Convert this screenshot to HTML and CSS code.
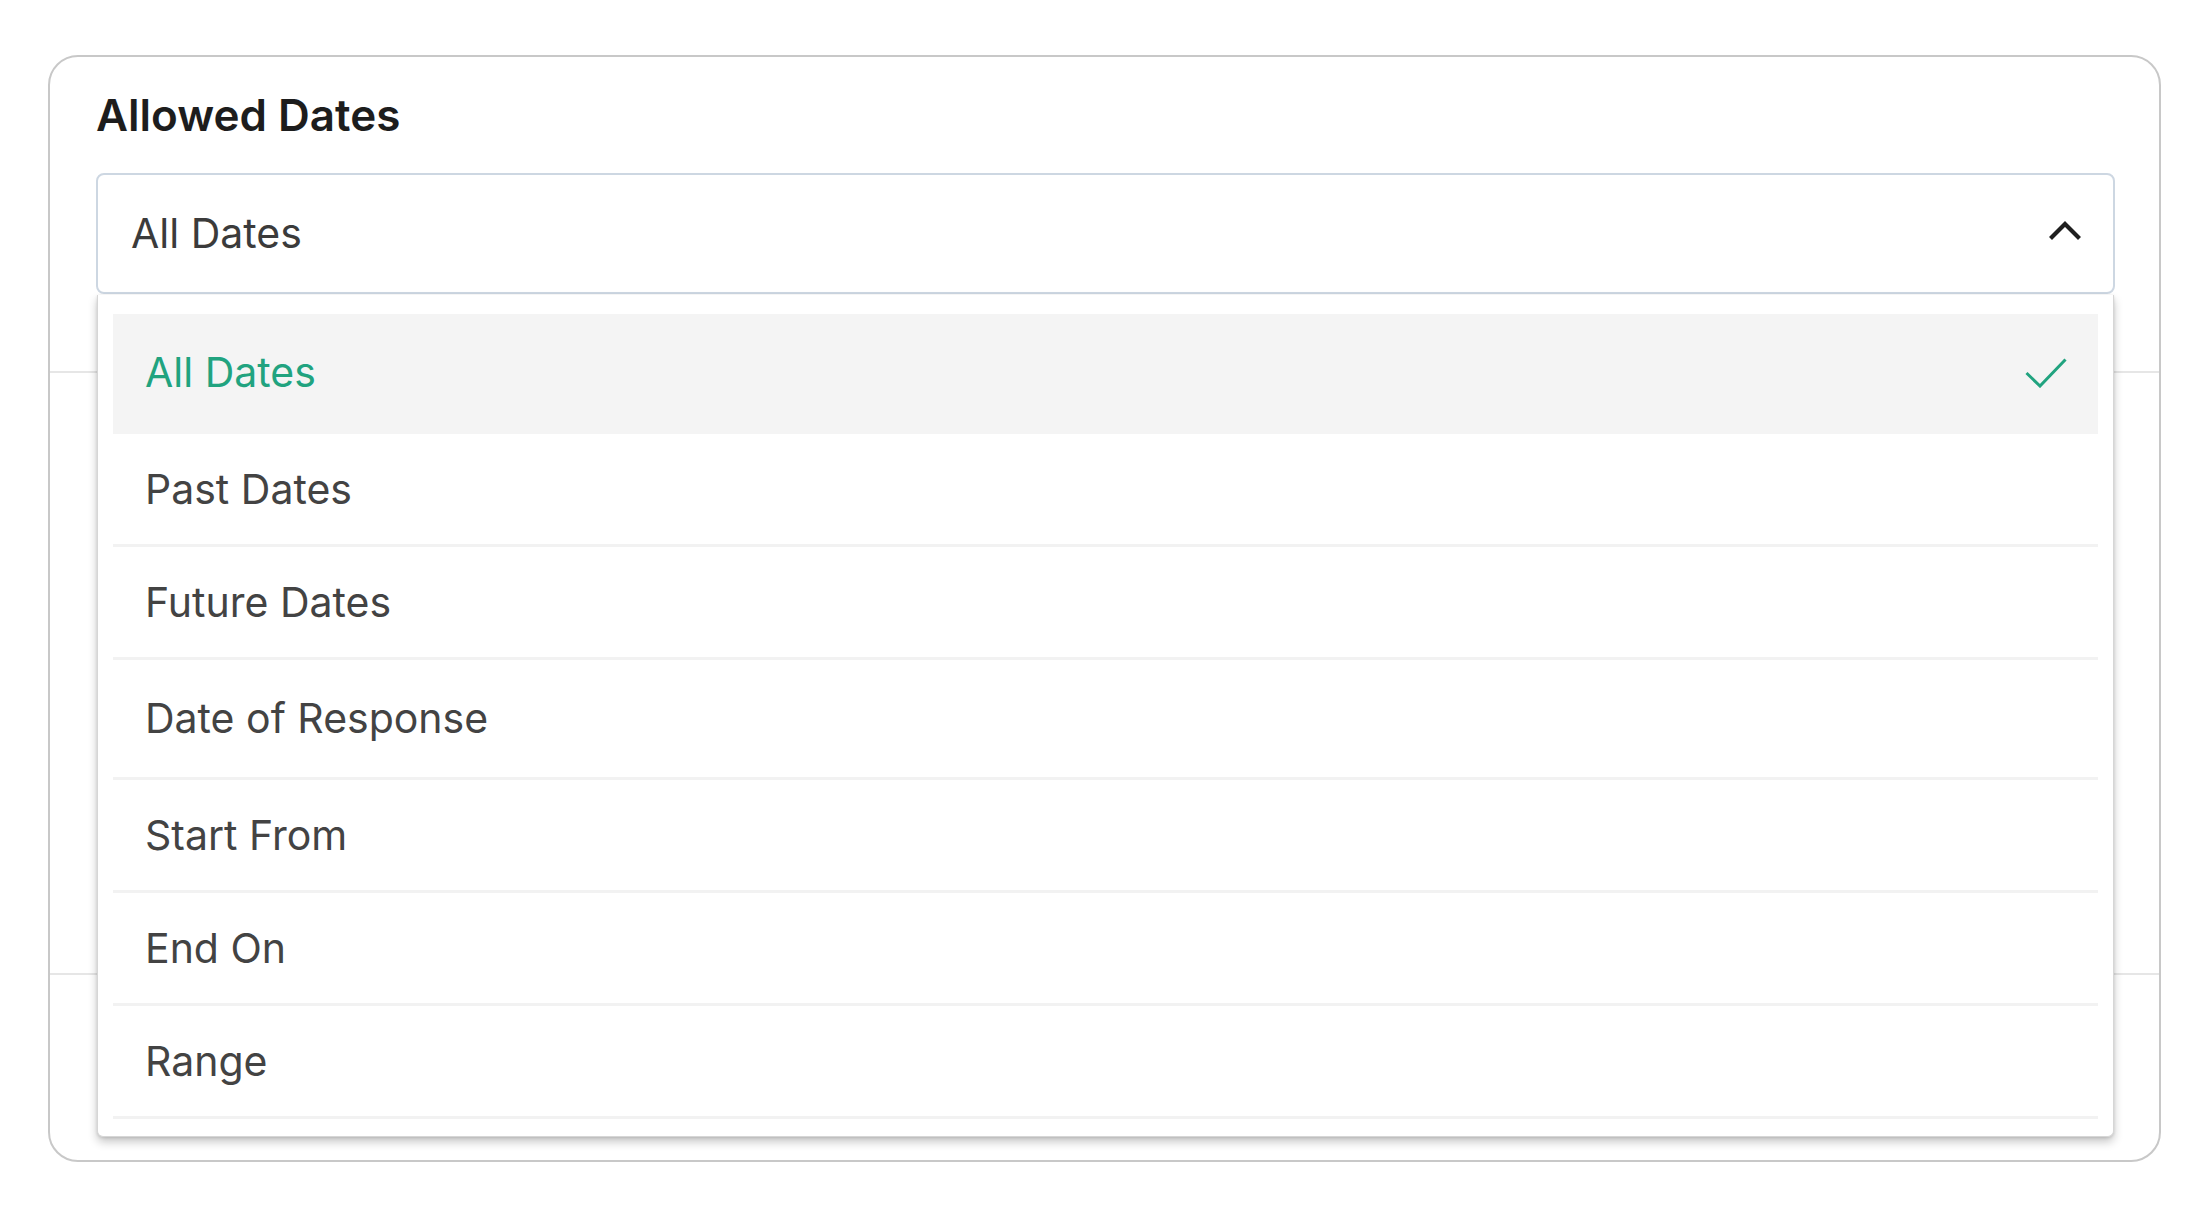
FILE: index.html
```html
<!DOCTYPE html>
<html lang="en">
<head>
<meta charset="utf-8">
<title>Allowed Dates</title>
<link rel="stylesheet" href="styles.css">
</head>
<body>
<div class="page">
  <div class="card">
    <div class="card-head">
      <h2 class="title">Allowed Dates</h2>
      <div class="select-wrap">
        <div class="select">
          <span class="select-value">All Dates</span>
          <svg class="chevron" width="34" height="20" viewBox="0 0 34 20" aria-hidden="true">
            <polyline points="2.5,17.5 17,3 31.5,17.5" fill="none" stroke="#1f1f1f" stroke-width="4.2" stroke-linejoin="miter"/>
          </svg>
        </div>
        <ul class="menu">
          <li class="option selected">
            <span>All Dates</span>
            <svg class="check" width="42" height="30" viewBox="0 0 42 30" aria-hidden="true">
              <polyline points="1.5,15 15,28 40.5,1.5" fill="none" stroke="#21a37f" stroke-width="3"/>
            </svg>
          </li>
          <li class="option"><span>Past Dates</span></li>
          <li class="option"><span>Future Dates</span></li>
          <li class="option tall"><span>Date of Response</span></li>
          <li class="option"><span>Start From</span></li>
          <li class="option"><span>End On</span></li>
          <li class="option"><span>Range</span></li>
        </ul>
      </div>
    </div>
    <div class="section section-a"></div>
    <div class="section section-b"></div>
  </div>
</div>
</body>
</html>
```

FILE: styles.css
```css
html, body {
  margin: 0;
  padding: 0;
  background: #ffffff;
}

body {
  font-family: Inter, "Liberation Sans", Arial, sans-serif;
  color: #3c3c3c;
}

.page {
  padding: 55px 49px 0 48px;
}

.card {
  box-sizing: border-box;
  height: 1107px;
  border: 2px solid #c8c8c8;
  border-radius: 30px;
  background: #ffffff;
  display: flex;
  flex-direction: column;
}

.card-head {
  padding: 32px 44px 77px 46px;
}

.title {
  margin: 0;
  font-size: 44px;
  line-height: 52px;
  font-weight: 600;
  color: #1d1d1d;
}

.select-wrap {
  position: relative;
  margin-top: 32px;
}

.select {
  box-sizing: border-box;
  height: 121px;
  border: 2px solid #cdd7e2;
  border-radius: 8px;
  padding: 0 31px 0 33px;
  display: flex;
  align-items: center;
  justify-content: space-between;
  background: #ffffff;
}

.select-value {
  font-size: 41px;
  line-height: 1;
  color: #3b3b3b;
}

.chevron {
  display: block;
  margin-top: -6px;
}

.menu {
  position: absolute;
  top: calc(100% + 1px);
  left: 1px;
  right: 1px;
  margin: 0;
  list-style: none;
  padding: 19px 15px 17px;
  background: #ffffff;
  border: 1px solid #d6d6d6;
  border-top: none;
  border-radius: 0 0 6px 6px;
  box-shadow: 0 5px 10px rgba(0, 0, 0, 0.22), 0 1px 3px rgba(0, 0, 0, 0.12);
  z-index: 2;
}

.option {
  box-sizing: border-box;
  height: 113px;
  padding: 0 31px 0 32px;
  display: flex;
  align-items: center;
  justify-content: space-between;
  border-bottom: 3px solid #f2f2f2;
  font-size: 41px;
  line-height: 1;
  color: #434343;
}

.option.selected {
  height: 120px;
  background: #f4f4f4;
  border-bottom-color: #f4f4f4;
  color: #21a37f;
}

.option.tall {
  height: 120px;
}

.check {
  display: block;
}

.section {
  border-top: 2px solid #e6e6e6;
}

.section-a {
  height: 600px;
}

.section-b {
  flex: 1;
}
```
